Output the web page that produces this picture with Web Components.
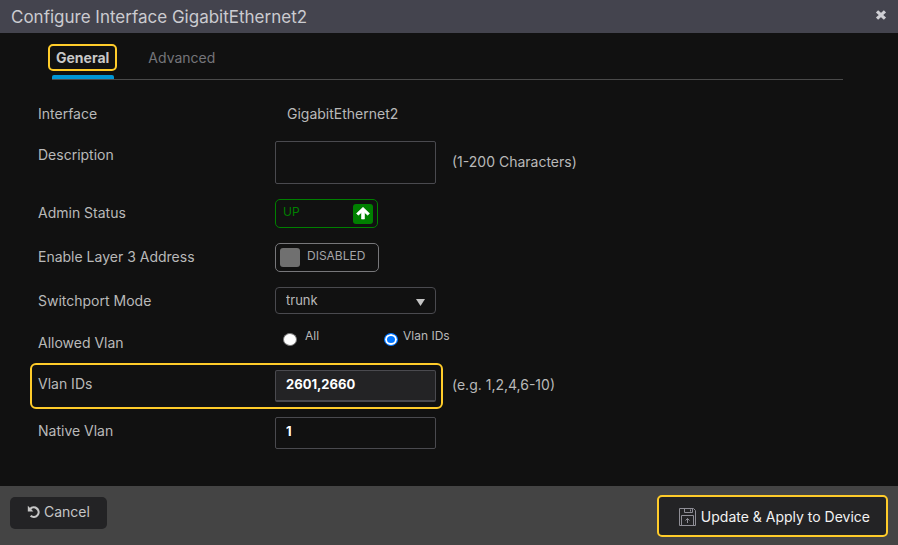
<!DOCTYPE html>
<html lang="en">
<head>
<meta charset="utf-8">
<meta name="viewport" content="width=device-width, initial-scale=1">
<title>Configure Interface GigabitEthernet2</title>
<style>
  :root {
    --surface: #111111;
    --header: #44444e;
    --footer: #444444;
    --button: #232325;
    --text: #b9b9b9;
    --line: #4a4a4f;
    --mark: #ffcc2a;
    --accent: #0096d6;
  }
  body {
    margin: 0;
    background: var(--surface);
    color: var(--text);
    font: 14px/20px Inter, "Liberation Sans", sans-serif;
  }
</style>
</head>
<body>
<config-dialog heading="Configure Interface GigabitEthernet2">
  <tab-bar></tab-bar>
  <interface-form></interface-form>
  <action-button slot="start" kind="cancel">Cancel</action-button>
  <action-button slot="end" kind="apply" marked>Update &amp; Apply to Device</action-button>
</config-dialog>

<template id="config-dialog">
  <style>
    :host { display: flex; flex-direction: column; min-height: 100vh; }
    header {
      display: flex; align-items: center; justify-content: space-between;
      height: 33px; padding: 0 11px; background: var(--header);
    }
    h1 { margin: 0; font-size: 17px; line-height: 32px; font-weight: 400; color: #cbcbd0; }
    .close { display: flex; padding: 0; border: 0; background: none; color: #cfcfd4; cursor: pointer; margin-bottom: 3px; }
    main { flex: 1; }
    footer {
      display: flex; align-items: flex-start; justify-content: space-between;
      padding: 9px 10px 8px; background: var(--footer);
    }
  </style>
  <header>
    <h1></h1>
    <button class="close" type="button" aria-label="Close">
      <svg width="12" height="12" viewBox="0 0 12 12"><path d="M3.2 3.4 L8.8 8.6 M8.8 3.4 L3.2 8.6" stroke="currentColor" stroke-width="3.2" stroke-linecap="square"/></svg>
    </button>
  </header>
  <main><slot></slot></main>
  <footer><slot name="start"></slot><slot name="end"></slot></footer>
</template>

<template id="tab-bar">
  <style>
    :host { display: block; padding: 11px 55px 0 48px; }
    nav { display: flex; gap: 25px; align-items: flex-start; }
    button { font: inherit; line-height: 20px; background: none; cursor: pointer; border: 2px solid transparent; border-radius: 5px; padding: 2px 4px 1px; color: #75757a; }
    .tab { display: flex; flex-direction: column; gap: 4px; }
    .on button { border-color: var(--mark); color: #c8c8c8; font-weight: 700; padding: 2px 6px 1px; }
    .on::after { content: ""; height: 4px; margin: 0 3px 0 4px; background: var(--accent); border-radius: 2px 2px 0 0; }
    hr { margin: 0 0 0 4px; border: 0; height: 1px; background: #4a4a4a; }
  </style>
  <nav>
    <div class="tab on"><button type="button">General</button></div>
    <div class="tab"><button type="button">Advanced</button></div>
  </nav>
  <hr>
</template>

<template id="field-row">
  <style>
    :host { display: flex; align-items: center; gap: 16px; }
    .main { display: grid; grid-template-columns: 237px 161px; }
    :host([marked]) .main { margin: -7px -7px -7px -8px; padding: 5px 5px 5px 6px; border: 2px solid var(--mark); border-radius: 6px; }
    .name { height: 26px; line-height: 28px; }
    .control { display: flex; }
    .hint { padding-bottom: 2px; }
  </style>
  <div class="main">
    <div class="name"><slot name="label"></slot></div>
    <div class="control"><slot></slot></div>
  </div>
  <div class="hint"><slot name="hint"></slot></div>
</template>

<template id="interface-form">
  <style>
    :host { display: block; padding: 20px 38px 37px; }
    form { display: flex; flex-direction: column; gap: 15px; }
    input, textarea, select { font: inherit; color: inherit; }
    textarea, .text, select {
      box-sizing: border-box; width: 100%; margin: 0;
      border: 1px solid var(--line); border-radius: 2px; background: var(--surface);
    }
    textarea { height: 43px; resize: none; display: block; }
    .text { height: 32px; padding: 0 10px 4px; color: #fff; font-size: 13px; font-weight: 700; }
    .filled { background: var(--button); border-bottom-width: 2px; }
    output { padding-left: 12px; line-height: 28px; height: 26px; }
    .select { position: relative; width: 100%; height: 27px; }
    select { appearance: none; height: 27px; border-radius: 4px; padding: 0 10px 2px; font-size: 13px; }
    .select svg { position: absolute; right: 11px; top: 12px; pointer-events: none; }
    .toggle {
      display: flex; align-items: center; box-sizing: border-box; height: 29px; padding: 0 4px;
      border: 1px solid; border-radius: 5px; font-size: 12px; background: none; font-family: inherit; cursor: pointer;
    }
    .toggle span { padding-bottom: 4px; }
    .up { width: 103px; color: #008000; justify-content: space-between; padding-left: 7px; }
    .up i { display: flex; width: 20px; height: 20px; border-radius: 3px; background: #008000; }
    .off { width: 104px; color: #77777a; gap: 7px; }
    .off i { width: 20px; height: 19px; border-radius: 3px; background: #707070; }
    .off span { color: #a4a4a8; }
    .radios { display: flex; gap: 57px; height: 26px; }
    .radios label { display: flex; align-items: flex-start; gap: 8px; font-size: 12px; line-height: 13px; }
    .radios div:last-child label { gap: 5px; }
    .radios input { appearance: none; box-sizing: border-box; margin: 4px 0 0 8px; width: 14px; height: 13px; border-radius: 50%; background: #fff; border: 1px solid #777; }
    .radios input:checked { background: #0075ff; border-color: #0075ff; box-shadow: inset 0 0 0 2px #fff; }
  </style>
  <form>
    <field-row>
      <label slot="label" for="iface">Interface</label>
      <output id="iface">GigabitEthernet2</output>
    </field-row>
    <field-row>
      <label slot="label" for="desc">Description</label>
      <textarea id="desc"></textarea>
      <span slot="hint">(1-200 Characters)</span>
    </field-row>
    <field-row>
      <label slot="label" for="admin">Admin Status</label>
      <button class="toggle up" id="admin" type="button" aria-pressed="true"><span>UP</span><i><svg width="20" height="20" viewBox="0 0 20 20"><path d="M10 3.3 L16.5 9.4 L14.7 11.2 L11.5 8.5 V15 H8.5 V8.5 L5.3 11.2 L3.5 9.4 Z" fill="#fff" stroke="#fff" stroke-width=".6" stroke-linejoin="round"/></svg></i></button>
    </field-row>
    <field-row>
      <label slot="label" for="layer3">Enable Layer 3 Address</label>
      <button class="toggle off" id="layer3" type="button" aria-pressed="false"><i></i><span>DISABLED</span></button>
    </field-row>
    <field-row>
      <label slot="label" for="mode">Switchport Mode</label>
      <div class="select">
        <select id="mode"><option>trunk</option></select>
        <svg width="9" height="7" viewBox="0 0 9 7"><path d="M0 0 H9 L4.5 7 Z" fill="#c4c4c4"/></svg>
      </div>
    </field-row>
    <field-row>
      <span slot="label" id="allowed">Allowed Vlan</span>
      <div class="radios" role="radiogroup" aria-labelledby="allowed">
        <div><label><input type="radio" name="allowed">All</label></div>
        <div><label><input type="radio" name="allowed" checked>Vlan&nbsp;IDs</label></div>
      </div>
    </field-row>
    <field-row marked>
      <label slot="label" for="vlans">Vlan IDs</label>
      <input class="text filled" id="vlans" type="text" value="2601,2660">
      <span slot="hint">(e.g. 1,2,4,6-10)</span>
    </field-row>
    <field-row>
      <label slot="label" for="native">Native Vlan</label>
      <input class="text" id="native" type="text" value="1">
    </field-row>
  </form>
</template>

<template id="action-button">
  <style>
    :host { display: block; }
    :host([kind="cancel"]) { margin-top: 2px; }
    button {
      display: flex; align-items: center; height: 32px; padding: 0 17px 2px 17px; gap: 3px;
      border: 0; border-radius: 5px; background: var(--button); color: #c6c6c6; font: inherit; cursor: pointer;
    }
    :host([marked]) button { height: 42px; padding: 2px 16px 0 20px; gap: 5px; border: 2px solid var(--mark); color: #f2f2f2; }
    svg { display: none; }
    :host([kind="cancel"]) .undo, :host([kind="apply"]) .save { display: block; }
  </style>
  <button type="button">
    <svg class="undo" width="14" height="14" viewBox="0 0 14 14" fill="none" stroke="currentColor"><path d="M3.2 4 A4.8 4.8 0 1 1 3.6 10.8" stroke-width="2.2"/><path d="M.8 .8 V6.4 H6.4 Z" fill="currentColor" stroke="none"/></svg>
    <svg class="save" width="17" height="18" viewBox="0 0 17 18" fill="none" stroke="#8f8e96"><path d="M.5 .5 H14.5 L16.5 2.5 V17.5 H.5 Z M2.5 17.5 V7.5 H14.5 V17.5 M5.5 .5 V4.5 H13.5 V.5 M11.5 1.5 V3.5"/><path d="M8.5 15 V10.5 M6.5 12.5 L8.5 10.5 L10.5 12.5"/></svg>
    <slot></slot>
  </button>
</template>

<script>
  class TemplateElement extends HTMLElement {
    constructor() {
      super();
      const template = document.getElementById(this.localName);
      this.attachShadow({ mode: "open" }).append(template.content.cloneNode(true));
    }
  }
  customElements.define("field-row", class extends TemplateElement {});
  customElements.define("tab-bar", class extends TemplateElement {});
  customElements.define("interface-form", class extends TemplateElement {});
  customElements.define("action-button", class extends TemplateElement {});
  customElements.define("config-dialog", class extends TemplateElement {
    connectedCallback() {
      this.shadowRoot.querySelector("h1").textContent = this.getAttribute("heading");
    }
  });
</script>
</body>
</html>
